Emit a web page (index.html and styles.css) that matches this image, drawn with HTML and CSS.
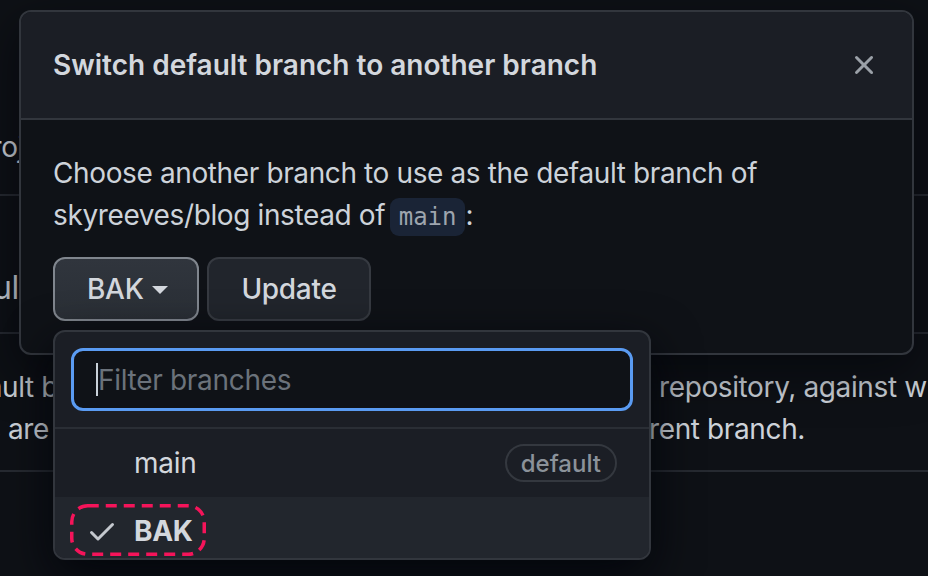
FILE: index.html
```html
<!DOCTYPE html>
<html lang="en">
<head>
<meta charset="utf-8">
<title>Switch default branch</title>
<link rel="stylesheet" href="styles.css">
</head>
<body>
  <div class="page">
    <div class="bg-row bg-row-a">
      <span class="frag-left frag-a">proj</span>
    </div>
    <div class="bg-heading">
      <span class="frag-left frag-h">Defaul</span>
    </div>
    <div class="bg-para">
      <div class="bg-line">
        <span class="frag-left frag-c">The default b</span>
        <span class="frag-right frag-c2">repository, against which all pull requests</span>
      </div>
      <div class="bg-line">
        <span class="frag-left frag-d">commits are</span>
        <span class="frag-right frag-d2">rent branch.</span>
      </div>
    </div>
  </div>

  <div class="dialog">
    <div class="dialog-header">
      <h1 class="dialog-title">Switch default branch to another branch</h1>
      <button class="close-btn" aria-label="Close">
        <svg viewBox="0 0 16 16" width="32" height="32"><path fill="currentColor" d="M3.72 3.72a.75.75 0 0 1 1.06 0L8 6.94l3.22-3.22a.749.749 0 0 1 1.275.326.749.749 0 0 1-.215.734L9.060 8l3.22 3.22a.749.749 0 0 1-.326 1.275.749.749 0 0 1-.734-.215L8 9.06l-3.22 3.22a.751.751 0 0 1-1.042-.018.751.751 0 0 1-.018-1.042L6.94 8 3.72 4.780a.75.75 0 0 1 0-1.06Z"/></svg>
      </button>
    </div>
    <div class="dialog-body">
      <p class="dialog-text">Choose another branch to use as the default branch of skyreeves/blog instead of <code class="code">main</code>:</p>
      <div class="actions">
        <div class="picker">
          <button class="btn btn-select">BAK <span class="caret"></span></button>
          <div class="menu">
            <div class="menu-filter">
              <div class="filter-input"><span class="text-caret"></span><span class="placeholder">Filter branches</span></div>
            </div>
            <div class="menu-list">
              <div class="menu-item">
                <span class="check-slot"></span>
                <span class="item-label">main</span>
                <span class="badge">default</span>
              </div>
              <div class="menu-item is-selected">
                <span class="selected-mark">
                  <svg class="check" viewBox="0 0 16 16" width="32" height="32"><path fill="currentColor" d="M13.78 4.22a.75.75 0 0 1 0 1.06l-7.25 7.25a.75.75 0 0 1-1.06 0L2.22 9.28a.751.751 0 0 1 .018-1.042.751.751 0 0 1 1.042-.018L6 10.94l6.72-6.72a.75.75 0 0 1 1.06 0Z"/></svg>
                  <span class="item-label strong">BAK</span>
                  <svg class="annot" viewBox="0 0 136 52" width="136" height="52"><rect x="1.75" y="1.75" width="132.5" height="48.5" rx="16" ry="16" fill="none" stroke="#f5145a" stroke-width="3.5" stroke-dasharray="11 7"/></svg>
                </span>
              </div>
            </div>
          </div>
        </div>
        <button class="btn btn-update">Update</button>
      </div>
    </div>
  </div>
</body>
</html>
```
FILE: styles.css
```css
* { box-sizing: border-box; }

html, body {
  margin: 0;
  padding: 0;
}

body {
  width: 928px;
  height: 576px;
  overflow: hidden;
  background: #0e1116;
  color: #cdd3da;
  font-family: Inter, "Noto Sans", sans-serif;
  position: relative;
}

/* ---------- background page ---------- */
.page {
  padding-top: 126px;
  letter-spacing: -0.38px;
}

.bg-row-a {
  height: 70px;
  border-bottom: 2px solid #262a31;
  font-size: 28px;
  line-height: 42px;
}

.bg-heading {
  margin-top: 68px;
  padding-bottom: 20px;
  border-bottom: 2px solid #262a31;
  font-size: 32px;
  line-height: 48px;
}

.bg-para {
  margin-top: 32px;
  padding-bottom: 20px;
  border-bottom: 2px solid #262a31;
  font-size: 28px;
  line-height: 42px;
}

.bg-line {
  display: flex;
  white-space: nowrap;
}

.frag-left {
  display: block;
  flex-shrink: 0;
  white-space: nowrap;
  direction: rtl;
  overflow: hidden;
  text-align: right;
}
.frag-a { width: 24px; }
.frag-h { width: 19px; }
.frag-c { width: 58px; }
.frag-d { width: 49px; }

.frag-right { display: block; flex-shrink: 0; white-space: nowrap; }
.frag-c2 { margin-left: 601px; }
.frag-d2 { margin-left: 600px; }

/* ---------- dialog ---------- */
.dialog {
  position: absolute;
  left: 19px;
  top: 10px;
  width: 895px;
  border: 2px solid #32363d;
  border-radius: 12px;
  background: #0f1217;
  box-shadow: 0 16px 48px rgba(1, 4, 9, 0.6);
}

.dialog-header {
  display: flex;
  align-items: center;
  justify-content: space-between;
  padding: 32px;
  background: #1b1e25;
  border-bottom: 2px solid #32363d;
  border-radius: 10px 10px 0 0;
}

.dialog-title {
  margin: 0;
  font-size: 28px;
  line-height: 42px;
  font-weight: 600;
  color: #d3d7dd;
}

.close-btn {
  width: 32px;
  height: 32px;
  padding: 0;
  border: 0;
  background: none;
  color: #9ba1a8;
  display: flex;
}

.dialog-body {
  padding: 32px;
}

.dialog-text {
  margin: 0 0 19px 0;
  font-size: 28px;
  line-height: 42px;
  letter-spacing: -0.38px;
  color: #cdd3da;
  width: 740px;
}

.code {
  font-family: "DejaVu Sans Mono", "Liberation Mono", monospace;
  font-size: 24px;
  letter-spacing: 0;
  padding: 5px 9px;
  margin-left: -3px;
  border-radius: 9px;
  background: #1a2436;
  color: #9ea5ae;
}

.actions {
  display: flex;
  gap: 8px;
}

.picker {
  position: relative;
}

.btn {
  height: 64px;
  padding: 0 32px;
  border-radius: 12px;
  font-family: Inter, "Noto Sans", sans-serif;
  font-size: 28px;
  font-weight: 500;
  letter-spacing: -0.3px;
  color: #d3d7dd;
  display: flex;
  align-items: center;
}

.btn-select {
  width: 146px;
  gap: 8px;
  background: linear-gradient(#30353d, #2a2f36);
  border: 2px solid #80868e;
}

.btn-update {
  width: 164px;
  background: #21252c;
  border: 2px solid #363a41;
  justify-content: center;
}

.caret {
  width: 0;
  height: 0;
  border-left: 8px solid transparent;
  border-right: 8px solid transparent;
  border-top: 8px solid #d3d7dd;
  margin-top: 2px;
}

/* ---------- branch menu ---------- */
.menu {
  position: absolute;
  left: 0;
  top: 73px;
  width: 598px;
  height: 230px;
  background: #1b1e25;
  border: 2px solid #32363d;
  border-radius: 12px;
  overflow: hidden;
  box-shadow: 0 16px 48px rgba(1, 4, 9, 0.85);
  z-index: 2;
}

.menu-filter {
  padding: 16px;
  border-bottom: 2px solid #2a2e35;
}

.filter-input {
  height: 63px;
  border: 3px solid #5a9bf2;
  border-radius: 12px;
  background: #0f1217;
  display: flex;
  align-items: center;
  padding-left: 22px;
}

.text-caret {
  width: 2px;
  height: 33px;
  background: #c9d1d9;
}

.placeholder {
  font-size: 28px;
  letter-spacing: -0.3px;
  color: #6b727b;
}

.menu-item {
  height: 68px;
  display: flex;
  align-items: center;
  padding: 0 32px 0 31px;
  font-size: 28px;
  letter-spacing: -0.3px;
}

.menu-item.is-selected {
  background: #22262d;
}

.check-slot {
  width: 32px;
  height: 32px;
  margin-right: 16px;
}

.item-label {
  color: #d3d7dd;
}

.item-label.strong {
  font-weight: 700;
}

.selected-mark {
  position: relative;
  display: flex;
  align-items: center;
  gap: 16px;
  margin-top: -1px;
}

.check {
  color: #c4c8ce;
}

.annot {
  position: absolute;
  left: -16px;
  top: -10px;
}

.badge {
  margin-left: auto;
  height: 38px;
  padding: 0 14px;
  border: 2px solid #34383f;
  border-radius: 19px;
  font-size: 24px;
  font-weight: 500;
  letter-spacing: 0;
  color: #8b929a;
  display: flex;
  align-items: center;
}
```
